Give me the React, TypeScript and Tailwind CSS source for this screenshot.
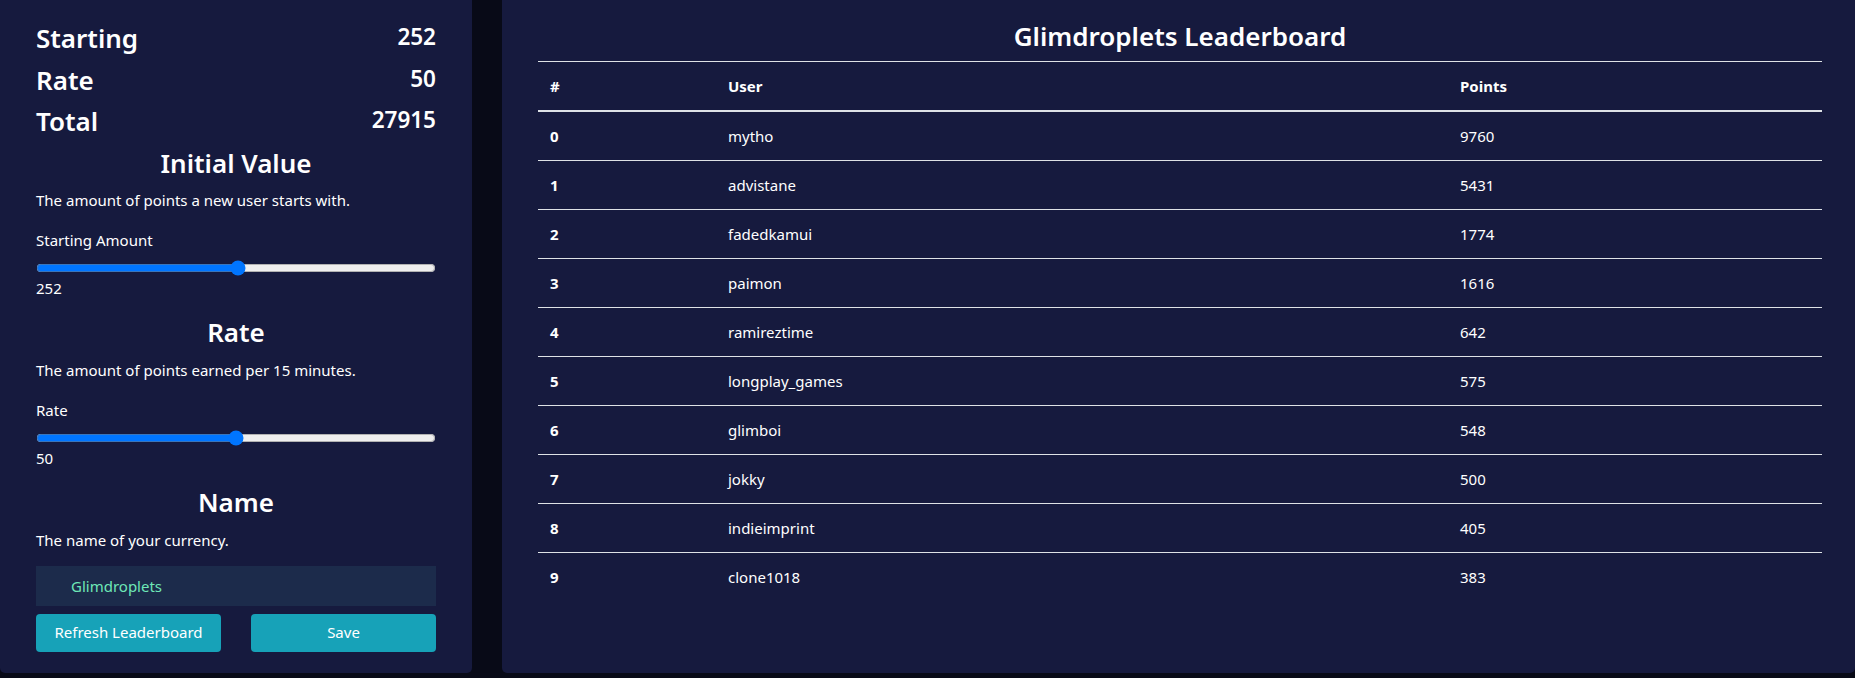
import React from "react";

const rows: [string, number][] = [
  ["mytho", 9760],
  ["advistane", 5431],
  ["fadedkamui", 1774],
  ["paimon", 1616],
  ["ramireztime", 642],
  ["longplay_games", 575],
  ["glimboi", 548],
  ["jokky", 500],
  ["indieimprint", 405],
  ["clone1018", 383],
];

function StatRow({ label, value }: { label: string; value: string }) {
  return (
    <div className="flex items-start justify-between mb-2">
      <div className="text-[26px] leading-[33.6px] font-semibold">{label}</div>
      <div className="text-[22.5px] leading-[28.8px] font-semibold pt-[1px]">{value}</div>
    </div>
  );
}

function Section({
  title,
  desc,
  label,
  value,
  max,
}: {
  title: string;
  desc: string;
  label: string;
  value: number;
  max: number;
}) {
  return (
    <div>
      <h3 className="text-[26px] leading-[33.6px] font-semibold text-center mb-2">{title}</h3>
      <p className="text-[15px] leading-6 mb-4">{desc}</p>
      <div className="mb-4">
        <label className="block text-[15px] leading-6 mb-2">{label}</label>
        <input
          type="range"
          min={0}
          max={max}
          defaultValue={value}
          className="block w-full h-4 m-0"
        />
        <div className="text-[15px] leading-6">{value}</div>
      </div>
    </div>
  );
}

export default function App() {
  return (
    <div
      className="w-[1855px] h-[678px] bg-[#080a17] text-white flex gap-[30px] overflow-hidden"
      style={{ fontFamily: '"Noto Sans", "Open Sans", sans-serif' }}
    >
      <div className="w-[472px] h-[673px] shrink-0 bg-[#161a3e] rounded-b-[5px] px-9 pt-[22px] flex flex-col">
        <StatRow label="Starting" value="252" />
        <StatRow label="Rate" value="50" />
        <StatRow label="Total" value="27915" />
        <Section
          title="Initial Value"
          desc="The amount of points a new user starts with."
          label="Starting Amount"
          value={252}
          max={500}
        />
        <Section
          title="Rate"
          desc="The amount of points earned per 15 minutes."
          label="Rate"
          value={50}
          max={100}
        />
        <h3 className="text-[26px] leading-[33.6px] font-semibold text-center mb-2">Name</h3>
        <p className="text-[15px] leading-6 mb-[14px]">The name of your currency.</p>
        <input
          type="text"
          defaultValue="Glimdroplets"
          className="h-10 w-full bg-[#1c2b4b] text-[#6ee7b7] text-[15px] pl-[35px] outline-none border-0"
        />
        <div className="flex gap-[30px] mt-2">
          <button className="flex-1 h-[38px] rounded-[4px] bg-[#17a2b8] text-white text-[15px]">
            Refresh Leaderboard
          </button>
          <button className="flex-1 h-[38px] rounded-[4px] bg-[#17a2b8] text-white text-[15px]">
            Save
          </button>
        </div>
      </div>
      <div className="flex-1 h-[673px] bg-[#161a3e] rounded-b-[5px] pl-9 pr-[33px] pt-5">
        <h3 className="text-[26px] leading-[33.6px] font-semibold text-center mb-[7px]">
          Glimdroplets Leaderboard
        </h3>
        <table className="w-full border-collapse text-[15px] leading-6 table-fixed">
          <colgroup>
            <col className="w-[178px]" />
            <col className="w-[732px]" />
            <col />
          </colgroup>
          <thead>
            <tr className="border-t border-[#dee2e6] border-b-2">
              <th className="text-left font-bold px-3 py-3">#</th>
              <th className="text-left font-bold px-3 py-3">User</th>
              <th className="text-left font-bold px-3 py-3">Points</th>
            </tr>
          </thead>
          <tbody>
            {rows.map(([user, pts], i) => (
              <tr key={user} className={i < rows.length - 1 ? "border-b border-[#dee2e6]" : ""}>
                <td className="px-3 py-3 font-bold">{i}</td>
                <td className="px-3 py-3">{user}</td>
                <td className="px-3 py-3">{pts}</td>
              </tr>
            ))}
          </tbody>
        </table>
      </div>
    </div>
  );
}
